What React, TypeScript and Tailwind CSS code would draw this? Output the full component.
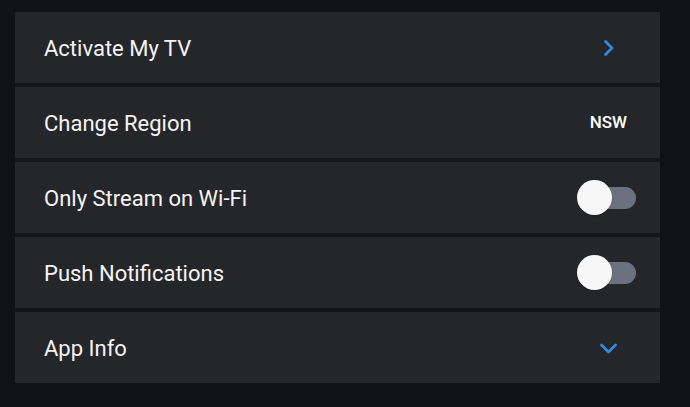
function Toggle() {
  return (
    <div className="relative w-[60px] h-[36px] flex items-center">
      <div className="absolute right-0 w-[46px] h-[22px] rounded-full bg-[#6b7180]" />
      <div className="absolute left-[1px] w-[35px] h-[35px] rounded-full bg-[#f7f7f7] shadow" />
    </div>
  );
}

const ChevronRight = () => (
  <svg width="12" height="16" viewBox="0 0 12 16" className="mr-[21px] mt-[1px]">
    <polyline points="2.5,1.5 9,8 2.5,14.5" fill="none" stroke="#2f8de4" strokeWidth="2.6" strokeLinecap="round" strokeLinejoin="round" />
  </svg>
);

const ChevronDown = () => (
  <svg width="17" height="11" viewBox="0 0 17 11" className="mr-[19px] mt-[1px]">
    <polyline points="1.5,2 8.5,9 15.5,2" fill="none" stroke="#2f8de4" strokeWidth="2.6" strokeLinecap="round" strokeLinejoin="round" />
  </svg>
);

const rows = [
  { label: "Activate My TV", right: <ChevronRight /> },
  { label: "Change Region", right: <span className="text-[17px] font-medium text-white mr-[9px]">NSW</span> },
  { label: "Only Stream on Wi-Fi", right: <Toggle /> },
  { label: "Push Notifications", right: <Toggle /> },
  { label: "App Info", right: <ChevronDown /> },
];

export default function App() {
  return (
    <div className="w-[690px] h-[407px] bg-[#111216] pt-[12px] pl-[15px]" style={{ fontFamily: "Roboto, 'Noto Sans', sans-serif" }}>
      <div className="w-[645px] flex flex-col gap-[4px] bg-[#151619]">
        {rows.map((r) => (
          <div key={r.label} className="h-[71px] bg-[#25262a] flex items-center justify-between pl-[29px] pr-[24px]">
            <span className="text-[22px] font-normal text-[#f4f4f4] pt-[2px]">{r.label}</span>
            {r.right}
          </div>
        ))}
      </div>
    </div>
  );
}
